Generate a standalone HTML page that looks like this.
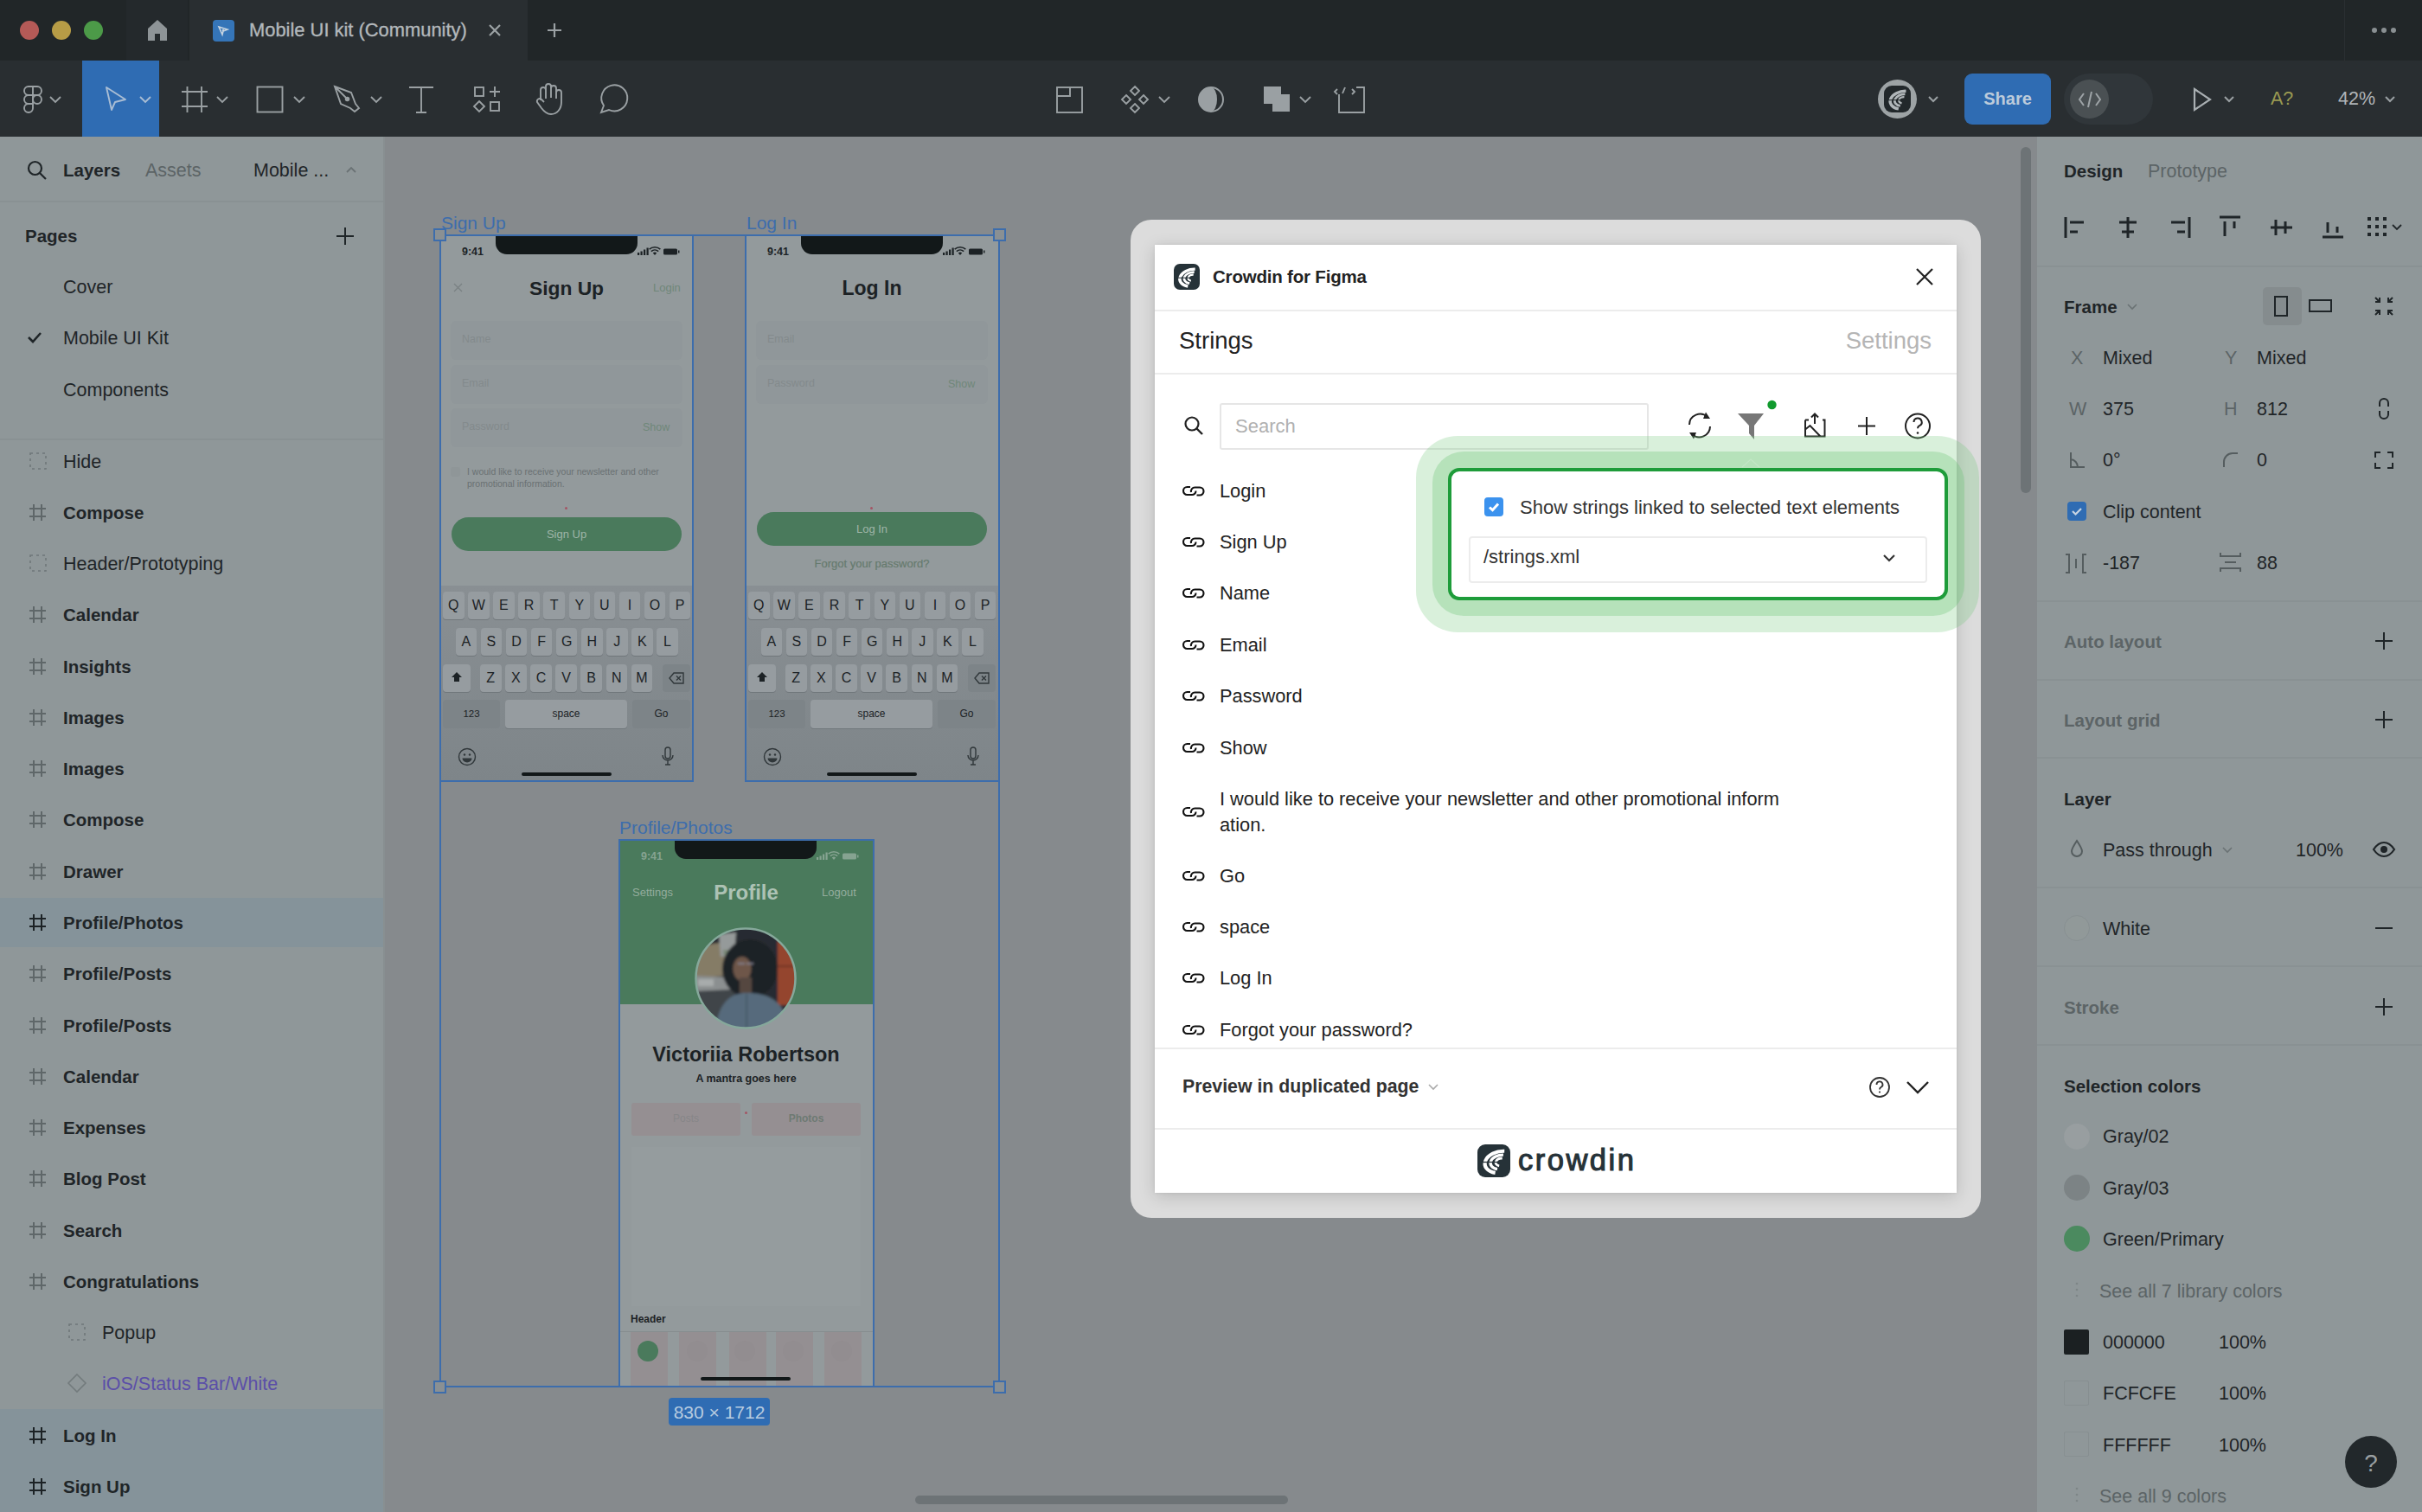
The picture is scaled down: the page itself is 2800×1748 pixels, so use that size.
<!DOCTYPE html>
<html><head><meta charset="utf-8">
<style>
*{margin:0;padding:0;box-sizing:border-box}
html,body{width:2800px;height:1748px;overflow:hidden;background:#868c8d;font-family:"Liberation Sans",sans-serif}
.a{position:absolute}
.t{position:absolute;white-space:nowrap;line-height:1}
#tabbar{left:0;top:0;width:2800px;height:70px;background:#212628}
#toolbar{left:0;top:70px;width:2800px;height:88px;background:#2a3033}
#left{left:0;top:158px;width:443px;height:1590px;background:#8f9697}
#right{left:2355px;top:158px;width:445px;height:1590px;background:#8f9697}
#canvas{left:443px;top:158px;width:1912px;height:1590px;background:#868c8d}
.ic{position:absolute;overflow:visible}
.lay{position:absolute;left:73px;font-size:22px;color:#1f2528;line-height:1}
.b{font-weight:bold}
</style></head><body>
<!-- TAB BAR -->
<div class="a" style="left:0;top:0;width:2800px;height:70px;background:#212628"></div>
<div class="a" style="left:146px;top:0;width:71px;height:70px;background:#24292c"></div>
<div class="a" style="left:219px;top:0;width:391px;height:70px;background:#292e31"></div>
<div class="a" style="left:2710px;top:0;width:1px;height:70px;background:#2a2f32"></div>
<div class="a" style="left:23px;top:24px;width:22px;height:22px;border-radius:50%;background:#b55a57"></div>
<div class="a" style="left:60px;top:24px;width:22px;height:22px;border-radius:50%;background:#b79c46"></div>
<div class="a" style="left:97px;top:24px;width:22px;height:22px;border-radius:50%;background:#4c9a48"></div>
<svg class="ic" style="left:170px;top:22px" width="24" height="26" viewBox="0 0 24 26"><path d="M12 1 L23 11 L23 25 L15 25 L15 17 L9 17 L9 25 L1 25 L1 11 Z" fill="#8e9497"/></svg>
<div class="a" style="left:246px;top:23px;width:25px;height:25px;border-radius:4px;background:#3575b8"></div>
<svg class="ic" style="left:249px;top:26px" width="19" height="19" viewBox="0 0 19 19"><path d="M4 5 L14 8 L9 10 L8 14 Z" fill="none" stroke="#c7d4e0" stroke-width="1.6"/><circle cx="9" cy="9" r="1.3" fill="#c7d4e0"/></svg>
<div class="t" style="left:288px;top:24px;font-size:21.9px;color:#b3b8bb;-webkit-text-stroke:0.35px #b3b8bb">Mobile UI kit (Community)</div>
<svg class="ic" style="left:564px;top:27px" width="16" height="16" viewBox="0 0 16 16"><path d="M2 2L14 14M14 2L2 14" stroke="#9ba1a4" stroke-width="2.2"/></svg>
<svg class="ic" style="left:632px;top:26px" width="18" height="18" viewBox="0 0 18 18"><path d="M9 1V17M1 9H17" stroke="#9ba1a4" stroke-width="2.2"/></svg>
<div class="a" style="left:2742px;top:32px;width:6px;height:6px;border-radius:50%;background:#8a9093"></div>
<div class="a" style="left:2753px;top:32px;width:6px;height:6px;border-radius:50%;background:#8a9093"></div>
<div class="a" style="left:2764px;top:32px;width:6px;height:6px;border-radius:50%;background:#8a9093"></div>

<!-- TOOLBAR -->
<div class="a" style="left:0;top:70px;width:2800px;height:88px;background:#292e31"></div>
<div class="a" style="left:95px;top:70px;width:89px;height:88px;background:#2f6cb3"></div>
<svg class="ic" style="left:0;top:70px" width="1600" height="88" viewBox="0 0 1600 88">
 <g fill="none" stroke="#9aa0a3" stroke-width="1.9">
  <path d="M38 30H33a5 5 0 0 0 0 10H38ZM38 30H43a5 5 0 0 1 0 10H38ZM38 40H33a5 5 0 0 0 0 10H38ZM38 50H33a5 5 0 1 0 5 5Z"/>
  <circle cx="43" cy="45" r="5"/>
  <path d="M58 42l6 6 6-6"/>
  <path d="M162 42l6 6 6-6" stroke="#a9bdd4"/>
  <path d="M123 31 L145 45 L133 48 L129 57 Z" stroke="#a9bdd4" stroke-linejoin="round"/>
  <path d="M216.5 30V60M233 30V60M210 36H240M210 53H240"/>
  <path d="M251 42l6 6 6-6"/>
  <rect x="297.5" y="30.5" width="29" height="29"/>
  <path d="M340 42l6 6 6-6"/>
  <path d="M387 30 L406 37 L411 50 L415 55 L410 59 L405 55 L394 50 Z M387 30 L401 44"/><circle cx="401.5" cy="44.5" r="1.8" fill="#9aa0a3"/>
  <path d="M429 42l6 6 6-6"/>
  <path d="M473 31H501M487 31V60M481 60H493"/>
  <rect x="549" y="31" width="10" height="10"/><path d="M572 30V42M566 36H578"/><path d="M554 47 L560 53 L554 59 L548 53 Z"/><rect x="567" y="48" width="10" height="10"/>
  <path d="M625 46V34a3 3 0 0 1 6 0v10M631 42V30a3 3 0 0 1 6 0v13M637 43V32a3 3 0 0 1 6 0v12M643 44V37a3 3 0 0 1 6 0v11c0 8-5 14-12 14-5 0-8-3-11-7l-5-7a3 3 0 0 1 5-3l3 3"/>
  <path d="M695 60 L698 52 a15 15 0 1 1 6 5 Z"/>
  <rect x="1222" y="31" width="29" height="29"/><path d="M1222 41H1237V31"/>
  <path d="M1312 30l5 5-5 5-5-5zM1302 40l5 5-5 5-5-5zM1322 40l5 5-5 5-5-5zM1312 50l5 5-5 5-5-5z"/>
  <path d="M1340 42l6 6 6-6"/>
  <path d="M1503 42l6 6 6-6"/>
  <path d="M1548 39V60H1577V31H1568M1546 33l-3 3 3 3M1552 38l3-7M1563 33l3 3-3 3"/>
 </g>
 <circle cx="1400" cy="45" r="14" fill="#9aa0a3"/><path d="M1400 31 a14 14 0 0 1 0 28 a7 14 0 0 0 0-28z" fill="#292e31"/><circle cx="1400" cy="45" r="14" fill="none" stroke="#9aa0a3" stroke-width="2"/>
 <path d="M1461 30h20v9h10v20h-20v-9h-10z" fill="#9aa0a3"/>
</svg>
<!-- right toolbar -->
<div class="a" style="left:2171px;top:92px;width:45px;height:45px;border-radius:50%;background:#9da3a5"></div>
<svg class="ic" style="left:2178px;top:99px" width="31" height="31" viewBox="0 0 31 31"><rect width="31" height="31" rx="9" fill="#22282b"/><g transform="rotate(-10 22.43 16.72)"><path d="M27.22 7.03A15.50 10.20 0 0 0 15.16 25.73" fill="none" stroke="#b0b6b9" stroke-width="3.43"/><path d="M25.59 10.36A10.20 6.69 0 0 0 17.65 22.63" fill="none" stroke="#b0b6b9" stroke-width="2.77"/><path d="M24.07 13.31A5.30 3.59 0 0 0 19.94 19.89" fill="none" stroke="#b0b6b9" stroke-width="2.28"/></g><path d="M3.3 16.7H19.2" stroke="#22282b" stroke-width="1.06"/></svg>
<svg class="ic" style="left:2228px;top:110px" width="14" height="10" viewBox="0 0 14 10"><path d="M2 2l5 5 5-5" fill="none" stroke="#9aa0a3" stroke-width="2"/></svg>
<div class="a" style="left:2271px;top:85px;width:100px;height:59px;border-radius:9px;background:#2f6cb3"></div>
<div class="t b" style="left:2271px;top:104px;width:100px;text-align:center;font-size:20px;color:#bccbdb">Share</div>
<div class="a" style="left:2386px;top:85px;width:103px;height:59px;border-radius:30px;background:#30363a"></div>
<div class="a" style="left:2393px;top:92px;width:45px;height:45px;border-radius:50%;background:#4a5053"></div>
<svg class="ic" style="left:2402px;top:104px" width="28" height="22" viewBox="0 0 28 22"><path d="M7 4L2 11l5 7M21 4l5 7-5 7M16 2l-4 18" fill="none" stroke="#9ea4a7" stroke-width="2"/></svg>
<svg class="ic" style="left:2535px;top:101px" width="22" height="28" viewBox="0 0 22 28"><path d="M2 2L20 14 2 26Z" fill="none" stroke="#a9afb2" stroke-width="2.2"/></svg>
<svg class="ic" style="left:2570px;top:110px" width="14" height="10" viewBox="0 0 14 10"><path d="M2 2l5 5 5-5" fill="none" stroke="#9aa0a3" stroke-width="2"/></svg>
<div class="t" style="left:2625px;top:104px;font-size:21.5px;color:#9a9a52">A?</div>
<div class="t" style="left:2703px;top:104px;font-size:21.5px;color:#b0b5b8">42%</div>
<svg class="ic" style="left:2756px;top:110px" width="14" height="10" viewBox="0 0 14 10"><path d="M2 2l5 5 5-5" fill="none" stroke="#9aa0a3" stroke-width="2"/></svg>
<div class="a" style="left:443px;top:158px;width:1912px;height:1590px;background:#868a8d"></div>
<!-- CANVAS -->
<div class="a" style="left:509px;top:272px;width:292px;height:631px;background:#939a9c"></div>
<div class="a" style="left:862px;top:272px;width:292px;height:631px;background:#939a9c"></div>
<div class="a" style="left:573px;top:272px;width:164px;height:22px;background:#121819;border-radius:0 0 13px 13px"></div>
<div class="t b" style="left:534px;top:285px;font-size:12.5px;color:#1c2225">9:41</div>
<svg class="ic" style="left:737px;top:285px" width="52" height="12" viewBox="0 0 52 12"><g fill="#1c2225"><rect x="0" y="7" width="2.2" height="3"/><rect x="3.5" y="5.5" width="2.2" height="4.5"/><rect x="7" y="3.5" width="2.2" height="6.5"/><rect x="10.5" y="1.5" width="2.2" height="8.5"/><path d="M20 10l-2.2-2.4a3.2 3.2 0 0 1 4.4 0z M16.4 6.2a5.4 5.4 0 0 1 7.2 0l1.1-1.2a7 7 0 0 0-9.4 0z M14.2 3.8a8.6 8.6 0 0 1 11.6 0l1.1-1.2a10.2 10.2 0 0 0-13.8 0z"/><rect x="30" y="2.5" width="16" height="7" rx="1.5"/><rect x="47" y="4.5" width="1.5" height="3"/></g></svg>
<svg class="ic" style="left:524px;top:327px" width="11" height="11" viewBox="0 0 11 11"><path d="M1 1l9 9M10 1l-9 9" stroke="#7a8183" stroke-width="1.3"/></svg>
<div class="t" style="left:509px;top:322px;width:292px;text-align:center;font-size:22.8px;font-weight:bold;color:#1c2225">Sign Up</div>
<div class="t" style="left:755px;top:326px;font-size:13px;color:#6f8779">Login</div>
<div class="a" style="left:521px;top:371.0px;width:268px;height:45px;border-radius:6px;background:#90979a"></div>
<div class="t" style="left:534px;top:386.0px;font-size:12.5px;color:#838a8c">Name</div>
<div class="a" style="left:521px;top:421.7px;width:268px;height:45px;border-radius:6px;background:#90979a"></div>
<div class="t" style="left:534px;top:436.7px;font-size:12.5px;color:#838a8c">Email</div>
<div class="a" style="left:521px;top:472.4px;width:268px;height:45px;border-radius:6px;background:#90979a"></div>
<div class="t" style="left:534px;top:487.4px;font-size:12.5px;color:#838a8c">Password</div>
<div class="t" style="left:743px;top:488.4px;font-size:12.5px;color:#6f8779">Show</div>
<div class="a" style="left:521px;top:540px;width:11px;height:11px;border-radius:3px;background:#8f9698"></div>
<div class="t" style="left:540px;top:539px;font-size:10.5px;line-height:13.5px;color:#6a7173;white-space:normal;width:260px">I would like to receive your newsletter and other promotional information.</div>
<div class="a" style="left:653px;top:586px;width:3px;height:3px;border-radius:50%;background:#a45565"></div>
<div class="a" style="left:522px;top:598px;width:266px;height:39px;border-radius:20px;background:#4a7a5c"></div>
<div class="t" style="left:522px;top:611px;width:266px;text-align:center;font-size:13px;color:#9fb5a8">Sign Up</div>
<div class="a" style="left:509px;top:677px;width:292px;height:226px;background:linear-gradient(#898f93,#7e8589)"></div>
<div class="a" style="left:512.0px;top:684px;width:24.5px;height:31.5px;border-radius:4px;background:#969ca0;box-shadow:0 1px 0 #70777b"></div>
<div class="t" style="left:512.0px;top:692px;width:24.5px;text-align:center;font-size:16px;color:#1c2225">Q</div>
<div class="a" style="left:541.1px;top:684px;width:24.5px;height:31.5px;border-radius:4px;background:#969ca0;box-shadow:0 1px 0 #70777b"></div>
<div class="t" style="left:541.1px;top:692px;width:24.5px;text-align:center;font-size:16px;color:#1c2225">W</div>
<div class="a" style="left:570.2px;top:684px;width:24.5px;height:31.5px;border-radius:4px;background:#969ca0;box-shadow:0 1px 0 #70777b"></div>
<div class="t" style="left:570.2px;top:692px;width:24.5px;text-align:center;font-size:16px;color:#1c2225">E</div>
<div class="a" style="left:599.3px;top:684px;width:24.5px;height:31.5px;border-radius:4px;background:#969ca0;box-shadow:0 1px 0 #70777b"></div>
<div class="t" style="left:599.3px;top:692px;width:24.5px;text-align:center;font-size:16px;color:#1c2225">R</div>
<div class="a" style="left:628.4px;top:684px;width:24.5px;height:31.5px;border-radius:4px;background:#969ca0;box-shadow:0 1px 0 #70777b"></div>
<div class="t" style="left:628.4px;top:692px;width:24.5px;text-align:center;font-size:16px;color:#1c2225">T</div>
<div class="a" style="left:657.5px;top:684px;width:24.5px;height:31.5px;border-radius:4px;background:#969ca0;box-shadow:0 1px 0 #70777b"></div>
<div class="t" style="left:657.5px;top:692px;width:24.5px;text-align:center;font-size:16px;color:#1c2225">Y</div>
<div class="a" style="left:686.6px;top:684px;width:24.5px;height:31.5px;border-radius:4px;background:#969ca0;box-shadow:0 1px 0 #70777b"></div>
<div class="t" style="left:686.6px;top:692px;width:24.5px;text-align:center;font-size:16px;color:#1c2225">U</div>
<div class="a" style="left:715.7px;top:684px;width:24.5px;height:31.5px;border-radius:4px;background:#969ca0;box-shadow:0 1px 0 #70777b"></div>
<div class="t" style="left:715.7px;top:692px;width:24.5px;text-align:center;font-size:16px;color:#1c2225">I</div>
<div class="a" style="left:744.8px;top:684px;width:24.5px;height:31.5px;border-radius:4px;background:#969ca0;box-shadow:0 1px 0 #70777b"></div>
<div class="t" style="left:744.8px;top:692px;width:24.5px;text-align:center;font-size:16px;color:#1c2225">O</div>
<div class="a" style="left:773.9px;top:684px;width:24.5px;height:31.5px;border-radius:4px;background:#969ca0;box-shadow:0 1px 0 #70777b"></div>
<div class="t" style="left:773.9px;top:692px;width:24.5px;text-align:center;font-size:16px;color:#1c2225">P</div>
<div class="a" style="left:526.5px;top:726px;width:24.5px;height:31.5px;border-radius:4px;background:#969ca0;box-shadow:0 1px 0 #70777b"></div>
<div class="t" style="left:526.5px;top:734px;width:24.5px;text-align:center;font-size:16px;color:#1c2225">A</div>
<div class="a" style="left:555.6px;top:726px;width:24.5px;height:31.5px;border-radius:4px;background:#969ca0;box-shadow:0 1px 0 #70777b"></div>
<div class="t" style="left:555.6px;top:734px;width:24.5px;text-align:center;font-size:16px;color:#1c2225">S</div>
<div class="a" style="left:584.7px;top:726px;width:24.5px;height:31.5px;border-radius:4px;background:#969ca0;box-shadow:0 1px 0 #70777b"></div>
<div class="t" style="left:584.7px;top:734px;width:24.5px;text-align:center;font-size:16px;color:#1c2225">D</div>
<div class="a" style="left:613.8px;top:726px;width:24.5px;height:31.5px;border-radius:4px;background:#969ca0;box-shadow:0 1px 0 #70777b"></div>
<div class="t" style="left:613.8px;top:734px;width:24.5px;text-align:center;font-size:16px;color:#1c2225">F</div>
<div class="a" style="left:642.9px;top:726px;width:24.5px;height:31.5px;border-radius:4px;background:#969ca0;box-shadow:0 1px 0 #70777b"></div>
<div class="t" style="left:642.9px;top:734px;width:24.5px;text-align:center;font-size:16px;color:#1c2225">G</div>
<div class="a" style="left:672.0px;top:726px;width:24.5px;height:31.5px;border-radius:4px;background:#969ca0;box-shadow:0 1px 0 #70777b"></div>
<div class="t" style="left:672.0px;top:734px;width:24.5px;text-align:center;font-size:16px;color:#1c2225">H</div>
<div class="a" style="left:701.1px;top:726px;width:24.5px;height:31.5px;border-radius:4px;background:#969ca0;box-shadow:0 1px 0 #70777b"></div>
<div class="t" style="left:701.1px;top:734px;width:24.5px;text-align:center;font-size:16px;color:#1c2225">J</div>
<div class="a" style="left:730.2px;top:726px;width:24.5px;height:31.5px;border-radius:4px;background:#969ca0;box-shadow:0 1px 0 #70777b"></div>
<div class="t" style="left:730.2px;top:734px;width:24.5px;text-align:center;font-size:16px;color:#1c2225">K</div>
<div class="a" style="left:759.3px;top:726px;width:24.5px;height:31.5px;border-radius:4px;background:#969ca0;box-shadow:0 1px 0 #70777b"></div>
<div class="t" style="left:759.3px;top:734px;width:24.5px;text-align:center;font-size:16px;color:#1c2225">L</div>
<div class="a" style="left:512px;top:768px;width:32px;height:31.5px;border-radius:4px;background:#969ca0;box-shadow:0 1px 0 #70777b"></div>
<svg class="ic" style="left:521px;top:776px" width="14" height="14" viewBox="0 0 14 14"><path d="M7 1L13 7H10V12H4V7H1Z" fill="#1c2225"/></svg>
<div class="a" style="left:555.0px;top:768px;width:24.5px;height:31.5px;border-radius:4px;background:#969ca0;box-shadow:0 1px 0 #70777b"></div>
<div class="t" style="left:555.0px;top:776px;width:24.5px;text-align:center;font-size:16px;color:#1c2225">Z</div>
<div class="a" style="left:584.1px;top:768px;width:24.5px;height:31.5px;border-radius:4px;background:#969ca0;box-shadow:0 1px 0 #70777b"></div>
<div class="t" style="left:584.1px;top:776px;width:24.5px;text-align:center;font-size:16px;color:#1c2225">X</div>
<div class="a" style="left:613.2px;top:768px;width:24.5px;height:31.5px;border-radius:4px;background:#969ca0;box-shadow:0 1px 0 #70777b"></div>
<div class="t" style="left:613.2px;top:776px;width:24.5px;text-align:center;font-size:16px;color:#1c2225">C</div>
<div class="a" style="left:642.3px;top:768px;width:24.5px;height:31.5px;border-radius:4px;background:#969ca0;box-shadow:0 1px 0 #70777b"></div>
<div class="t" style="left:642.3px;top:776px;width:24.5px;text-align:center;font-size:16px;color:#1c2225">V</div>
<div class="a" style="left:671.4px;top:768px;width:24.5px;height:31.5px;border-radius:4px;background:#969ca0;box-shadow:0 1px 0 #70777b"></div>
<div class="t" style="left:671.4px;top:776px;width:24.5px;text-align:center;font-size:16px;color:#1c2225">B</div>
<div class="a" style="left:700.5px;top:768px;width:24.5px;height:31.5px;border-radius:4px;background:#969ca0;box-shadow:0 1px 0 #70777b"></div>
<div class="t" style="left:700.5px;top:776px;width:24.5px;text-align:center;font-size:16px;color:#1c2225">N</div>
<div class="a" style="left:729.6px;top:768px;width:24.5px;height:31.5px;border-radius:4px;background:#969ca0;box-shadow:0 1px 0 #70777b"></div>
<div class="t" style="left:729.6px;top:776px;width:24.5px;text-align:center;font-size:16px;color:#1c2225">M</div>
<div class="a" style="left:766px;top:768px;width:32px;height:32px;border-radius:4px;background:#7d8488"></div>
<svg class="ic" style="left:773px;top:777px" width="19" height="14" viewBox="0 0 19 14"><path d="M6 1H17V13H6L1 7Z" fill="none" stroke="#30373a" stroke-width="1.4"/><path d="M9 4.5l5 5M14 4.5l-5 5" stroke="#30373a" stroke-width="1.4"/></svg>
<div class="a" style="left:512px;top:809px;width:66px;height:33px;border-radius:4px;background:#7d8488"></div>
<div class="t" style="left:512px;top:820px;width:66px;text-align:center;font-size:11.5px;color:#1c2225">123</div>
<div class="a" style="left:584px;top:809px;width:141px;height:33px;border-radius:4px;background:#969ca0;box-shadow:0 1px 0 #70777b"></div>
<div class="t" style="left:584px;top:819px;width:141px;text-align:center;font-size:12px;color:#1c2225">space</div>
<div class="a" style="left:731px;top:809px;width:67px;height:33px;border-radius:4px;background:#7d8488"></div>
<div class="t" style="left:731px;top:819px;width:67px;text-align:center;font-size:12px;color:#1c2225">Go</div>
<svg class="ic" style="left:529px;top:864px" width="22" height="22" viewBox="0 0 22 22"><circle cx="11" cy="11" r="9.5" fill="none" stroke="#30373a" stroke-width="1.4"/><circle cx="8" cy="8.5" r="1.2" fill="#30373a"/><circle cx="14" cy="8.5" r="1.2" fill="#30373a"/><path d="M5.5 12.5h11a5.5 5 0 0 1-11 0z" fill="#30373a"/></svg>
<svg class="ic" style="left:765px;top:863px" width="14" height="24" viewBox="0 0 14 24"><rect x="4" y="1" width="6" height="13" rx="3" fill="none" stroke="#30373a" stroke-width="1.4"/><path d="M1 10a6 6 0 0 0 12 0M7 16v5M4 21h6" fill="none" stroke="#30373a" stroke-width="1.4"/></svg>
<div class="a" style="left:603px;top:893px;width:104px;height:4px;border-radius:2px;background:#121819"></div>
<div class="a" style="left:926px;top:272px;width:164px;height:22px;background:#121819;border-radius:0 0 13px 13px"></div>
<div class="t b" style="left:887px;top:285px;font-size:12.5px;color:#1c2225">9:41</div>
<svg class="ic" style="left:1090px;top:285px" width="52" height="12" viewBox="0 0 52 12"><g fill="#1c2225"><rect x="0" y="7" width="2.2" height="3"/><rect x="3.5" y="5.5" width="2.2" height="4.5"/><rect x="7" y="3.5" width="2.2" height="6.5"/><rect x="10.5" y="1.5" width="2.2" height="8.5"/><path d="M20 10l-2.2-2.4a3.2 3.2 0 0 1 4.4 0z M16.4 6.2a5.4 5.4 0 0 1 7.2 0l1.1-1.2a7 7 0 0 0-9.4 0z M14.2 3.8a8.6 8.6 0 0 1 11.6 0l1.1-1.2a10.2 10.2 0 0 0-13.8 0z"/><rect x="30" y="2.5" width="16" height="7" rx="1.5"/><rect x="47" y="4.5" width="1.5" height="3"/></g></svg>
<div class="t" style="left:862px;top:322px;width:292px;text-align:center;font-size:23px;font-weight:bold;color:#1c2225">Log In</div>
<div class="a" style="left:874px;top:371.0px;width:268px;height:45px;border-radius:6px;background:#90979a"></div>
<div class="t" style="left:887px;top:386.0px;font-size:12.5px;color:#838a8c">Email</div>
<div class="a" style="left:874px;top:421.7px;width:268px;height:45px;border-radius:6px;background:#90979a"></div>
<div class="t" style="left:887px;top:436.7px;font-size:12.5px;color:#838a8c">Password</div>
<div class="t" style="left:1096px;top:437.7px;font-size:12.5px;color:#6f8779">Show</div>
<div class="a" style="left:1006px;top:586px;width:3px;height:3px;border-radius:50%;background:#a45565"></div>
<div class="a" style="left:875px;top:592px;width:266px;height:39px;border-radius:20px;background:#4a7a5c"></div>
<div class="t" style="left:875px;top:605px;width:266px;text-align:center;font-size:13px;color:#9fb5a8">Log In</div>
<div class="t" style="left:862px;top:645px;width:292px;text-align:center;font-size:13px;color:#667a6e;-webkit-text-stroke:0.2px #667a6e">Forgot your password?</div>
<div class="a" style="left:862px;top:677px;width:292px;height:226px;background:linear-gradient(#898f93,#7e8589)"></div>
<div class="a" style="left:865.0px;top:684px;width:24.5px;height:31.5px;border-radius:4px;background:#969ca0;box-shadow:0 1px 0 #70777b"></div>
<div class="t" style="left:865.0px;top:692px;width:24.5px;text-align:center;font-size:16px;color:#1c2225">Q</div>
<div class="a" style="left:894.1px;top:684px;width:24.5px;height:31.5px;border-radius:4px;background:#969ca0;box-shadow:0 1px 0 #70777b"></div>
<div class="t" style="left:894.1px;top:692px;width:24.5px;text-align:center;font-size:16px;color:#1c2225">W</div>
<div class="a" style="left:923.2px;top:684px;width:24.5px;height:31.5px;border-radius:4px;background:#969ca0;box-shadow:0 1px 0 #70777b"></div>
<div class="t" style="left:923.2px;top:692px;width:24.5px;text-align:center;font-size:16px;color:#1c2225">E</div>
<div class="a" style="left:952.3px;top:684px;width:24.5px;height:31.5px;border-radius:4px;background:#969ca0;box-shadow:0 1px 0 #70777b"></div>
<div class="t" style="left:952.3px;top:692px;width:24.5px;text-align:center;font-size:16px;color:#1c2225">R</div>
<div class="a" style="left:981.4px;top:684px;width:24.5px;height:31.5px;border-radius:4px;background:#969ca0;box-shadow:0 1px 0 #70777b"></div>
<div class="t" style="left:981.4px;top:692px;width:24.5px;text-align:center;font-size:16px;color:#1c2225">T</div>
<div class="a" style="left:1010.5px;top:684px;width:24.5px;height:31.5px;border-radius:4px;background:#969ca0;box-shadow:0 1px 0 #70777b"></div>
<div class="t" style="left:1010.5px;top:692px;width:24.5px;text-align:center;font-size:16px;color:#1c2225">Y</div>
<div class="a" style="left:1039.6px;top:684px;width:24.5px;height:31.5px;border-radius:4px;background:#969ca0;box-shadow:0 1px 0 #70777b"></div>
<div class="t" style="left:1039.6px;top:692px;width:24.5px;text-align:center;font-size:16px;color:#1c2225">U</div>
<div class="a" style="left:1068.7px;top:684px;width:24.5px;height:31.5px;border-radius:4px;background:#969ca0;box-shadow:0 1px 0 #70777b"></div>
<div class="t" style="left:1068.7px;top:692px;width:24.5px;text-align:center;font-size:16px;color:#1c2225">I</div>
<div class="a" style="left:1097.8px;top:684px;width:24.5px;height:31.5px;border-radius:4px;background:#969ca0;box-shadow:0 1px 0 #70777b"></div>
<div class="t" style="left:1097.8px;top:692px;width:24.5px;text-align:center;font-size:16px;color:#1c2225">O</div>
<div class="a" style="left:1126.9px;top:684px;width:24.5px;height:31.5px;border-radius:4px;background:#969ca0;box-shadow:0 1px 0 #70777b"></div>
<div class="t" style="left:1126.9px;top:692px;width:24.5px;text-align:center;font-size:16px;color:#1c2225">P</div>
<div class="a" style="left:879.5px;top:726px;width:24.5px;height:31.5px;border-radius:4px;background:#969ca0;box-shadow:0 1px 0 #70777b"></div>
<div class="t" style="left:879.5px;top:734px;width:24.5px;text-align:center;font-size:16px;color:#1c2225">A</div>
<div class="a" style="left:908.6px;top:726px;width:24.5px;height:31.5px;border-radius:4px;background:#969ca0;box-shadow:0 1px 0 #70777b"></div>
<div class="t" style="left:908.6px;top:734px;width:24.5px;text-align:center;font-size:16px;color:#1c2225">S</div>
<div class="a" style="left:937.7px;top:726px;width:24.5px;height:31.5px;border-radius:4px;background:#969ca0;box-shadow:0 1px 0 #70777b"></div>
<div class="t" style="left:937.7px;top:734px;width:24.5px;text-align:center;font-size:16px;color:#1c2225">D</div>
<div class="a" style="left:966.8px;top:726px;width:24.5px;height:31.5px;border-radius:4px;background:#969ca0;box-shadow:0 1px 0 #70777b"></div>
<div class="t" style="left:966.8px;top:734px;width:24.5px;text-align:center;font-size:16px;color:#1c2225">F</div>
<div class="a" style="left:995.9px;top:726px;width:24.5px;height:31.5px;border-radius:4px;background:#969ca0;box-shadow:0 1px 0 #70777b"></div>
<div class="t" style="left:995.9px;top:734px;width:24.5px;text-align:center;font-size:16px;color:#1c2225">G</div>
<div class="a" style="left:1025.0px;top:726px;width:24.5px;height:31.5px;border-radius:4px;background:#969ca0;box-shadow:0 1px 0 #70777b"></div>
<div class="t" style="left:1025.0px;top:734px;width:24.5px;text-align:center;font-size:16px;color:#1c2225">H</div>
<div class="a" style="left:1054.1px;top:726px;width:24.5px;height:31.5px;border-radius:4px;background:#969ca0;box-shadow:0 1px 0 #70777b"></div>
<div class="t" style="left:1054.1px;top:734px;width:24.5px;text-align:center;font-size:16px;color:#1c2225">J</div>
<div class="a" style="left:1083.2px;top:726px;width:24.5px;height:31.5px;border-radius:4px;background:#969ca0;box-shadow:0 1px 0 #70777b"></div>
<div class="t" style="left:1083.2px;top:734px;width:24.5px;text-align:center;font-size:16px;color:#1c2225">K</div>
<div class="a" style="left:1112.3px;top:726px;width:24.5px;height:31.5px;border-radius:4px;background:#969ca0;box-shadow:0 1px 0 #70777b"></div>
<div class="t" style="left:1112.3px;top:734px;width:24.5px;text-align:center;font-size:16px;color:#1c2225">L</div>
<div class="a" style="left:865px;top:768px;width:32px;height:31.5px;border-radius:4px;background:#969ca0;box-shadow:0 1px 0 #70777b"></div>
<svg class="ic" style="left:874px;top:776px" width="14" height="14" viewBox="0 0 14 14"><path d="M7 1L13 7H10V12H4V7H1Z" fill="#1c2225"/></svg>
<div class="a" style="left:908.0px;top:768px;width:24.5px;height:31.5px;border-radius:4px;background:#969ca0;box-shadow:0 1px 0 #70777b"></div>
<div class="t" style="left:908.0px;top:776px;width:24.5px;text-align:center;font-size:16px;color:#1c2225">Z</div>
<div class="a" style="left:937.1px;top:768px;width:24.5px;height:31.5px;border-radius:4px;background:#969ca0;box-shadow:0 1px 0 #70777b"></div>
<div class="t" style="left:937.1px;top:776px;width:24.5px;text-align:center;font-size:16px;color:#1c2225">X</div>
<div class="a" style="left:966.2px;top:768px;width:24.5px;height:31.5px;border-radius:4px;background:#969ca0;box-shadow:0 1px 0 #70777b"></div>
<div class="t" style="left:966.2px;top:776px;width:24.5px;text-align:center;font-size:16px;color:#1c2225">C</div>
<div class="a" style="left:995.3px;top:768px;width:24.5px;height:31.5px;border-radius:4px;background:#969ca0;box-shadow:0 1px 0 #70777b"></div>
<div class="t" style="left:995.3px;top:776px;width:24.5px;text-align:center;font-size:16px;color:#1c2225">V</div>
<div class="a" style="left:1024.4px;top:768px;width:24.5px;height:31.5px;border-radius:4px;background:#969ca0;box-shadow:0 1px 0 #70777b"></div>
<div class="t" style="left:1024.4px;top:776px;width:24.5px;text-align:center;font-size:16px;color:#1c2225">B</div>
<div class="a" style="left:1053.5px;top:768px;width:24.5px;height:31.5px;border-radius:4px;background:#969ca0;box-shadow:0 1px 0 #70777b"></div>
<div class="t" style="left:1053.5px;top:776px;width:24.5px;text-align:center;font-size:16px;color:#1c2225">N</div>
<div class="a" style="left:1082.6px;top:768px;width:24.5px;height:31.5px;border-radius:4px;background:#969ca0;box-shadow:0 1px 0 #70777b"></div>
<div class="t" style="left:1082.6px;top:776px;width:24.5px;text-align:center;font-size:16px;color:#1c2225">M</div>
<div class="a" style="left:1119px;top:768px;width:32px;height:32px;border-radius:4px;background:#7d8488"></div>
<svg class="ic" style="left:1126px;top:777px" width="19" height="14" viewBox="0 0 19 14"><path d="M6 1H17V13H6L1 7Z" fill="none" stroke="#30373a" stroke-width="1.4"/><path d="M9 4.5l5 5M14 4.5l-5 5" stroke="#30373a" stroke-width="1.4"/></svg>
<div class="a" style="left:865px;top:809px;width:66px;height:33px;border-radius:4px;background:#7d8488"></div>
<div class="t" style="left:865px;top:820px;width:66px;text-align:center;font-size:11.5px;color:#1c2225">123</div>
<div class="a" style="left:937px;top:809px;width:141px;height:33px;border-radius:4px;background:#969ca0;box-shadow:0 1px 0 #70777b"></div>
<div class="t" style="left:937px;top:819px;width:141px;text-align:center;font-size:12px;color:#1c2225">space</div>
<div class="a" style="left:1084px;top:809px;width:67px;height:33px;border-radius:4px;background:#7d8488"></div>
<div class="t" style="left:1084px;top:819px;width:67px;text-align:center;font-size:12px;color:#1c2225">Go</div>
<svg class="ic" style="left:882px;top:864px" width="22" height="22" viewBox="0 0 22 22"><circle cx="11" cy="11" r="9.5" fill="none" stroke="#30373a" stroke-width="1.4"/><circle cx="8" cy="8.5" r="1.2" fill="#30373a"/><circle cx="14" cy="8.5" r="1.2" fill="#30373a"/><path d="M5.5 12.5h11a5.5 5 0 0 1-11 0z" fill="#30373a"/></svg>
<svg class="ic" style="left:1118px;top:863px" width="14" height="24" viewBox="0 0 14 24"><rect x="4" y="1" width="6" height="13" rx="3" fill="none" stroke="#30373a" stroke-width="1.4"/><path d="M1 10a6 6 0 0 0 12 0M7 16v5M4 21h6" fill="none" stroke="#30373a" stroke-width="1.4"/></svg>
<div class="a" style="left:956px;top:893px;width:104px;height:4px;border-radius:2px;background:#121819"></div>
<div class="a" style="left:716px;top:971px;width:293px;height:632px;background:#939a9c"></div>
<div class="a" style="left:716px;top:971px;width:293px;height:190px;background:#4a7a5c"></div>
<div class="a" style="left:780px;top:971px;width:164px;height:22px;background:#121819;border-radius:0 0 13px 13px"></div>
<div class="t b" style="left:741px;top:984px;font-size:12.5px;color:#86a391">9:41</div>
<svg class="ic" style="left:944px;top:984px" width="52" height="12" viewBox="0 0 52 12"><g fill="#86a391"><rect x="0" y="7" width="2.2" height="3"/><rect x="3.5" y="5.5" width="2.2" height="4.5"/><rect x="7" y="3.5" width="2.2" height="6.5"/><rect x="10.5" y="1.5" width="2.2" height="8.5"/><path d="M20 10l-2.2-2.4a3.2 3.2 0 0 1 4.4 0z M16.4 6.2a5.4 5.4 0 0 1 7.2 0l1.1-1.2a7 7 0 0 0-9.4 0z M14.2 3.8a8.6 8.6 0 0 1 11.6 0l1.1-1.2a10.2 10.2 0 0 0-13.8 0z"/><rect x="30" y="2.5" width="16" height="7" rx="1.5"/><rect x="47" y="4.5" width="1.5" height="3"/></g></svg>
<div class="t" style="left:731px;top:1025px;font-size:13px;color:#93ac9c">Settings</div>
<div class="t b" style="left:716px;top:1020px;width:293px;text-align:center;font-size:24px;color:#adc2b4">Profile</div>
<div class="t" style="left:950px;top:1025px;font-size:13px;color:#93ac9c">Logout</div>
<svg class="ic" style="left:803px;top:1072px" width="118" height="118" viewBox="0 0 118 118"><defs><clipPath id="av"><circle cx="59" cy="59" r="57.5"/></clipPath><filter id="bl" x="-10%" y="-10%" width="120%" height="120%"><feGaussianBlur stdDeviation="1.6"/></filter></defs>
<g clip-path="url(#av)"><g filter="url(#bl)">
<rect width="118" height="118" fill="#262c30"/>
<rect x="0" y="60" width="50" height="58" fill="#3f4548"/>
<path d="M0 22 L44 16 L44 56 L0 58Z" fill="#857b66"/>
<path d="M28 8 L48 6 L46 32 L30 34Z" fill="#959a9a"/>
<rect x="33" y="26" width="8" height="6" fill="#7c8a78"/>
<path d="M0 56 L44 58 L42 72 L0 74Z" fill="#8b8f90"/>
<rect x="4" y="60" width="18" height="8" fill="#a8acac"/>
<rect x="96" y="16" width="22" height="74" fill="#94452f"/>
<rect x="96" y="44" width="22" height="2" fill="#6e3222"/>
<ellipse cx="64" cy="48" rx="32" ry="34" fill="#1e2226"/>
<ellipse cx="55" cy="48" rx="10.5" ry="14" fill="#6e5649"/>
<rect x="52" y="58" width="14" height="18" fill="#55463f"/>
<path d="M24 118 C28 86 42 76 60 76 C82 76 104 82 110 118Z" fill="#566b7c"/>
<path d="M60 77 L60 118" stroke="#3d5060" stroke-width="1.2"/>
<path d="M50 42 h8 M60 42 h8" stroke="#8a8a9a" stroke-width="1.4"/>
</g></g>
<circle cx="59" cy="59" r="57.5" fill="none" stroke="#86a89b" stroke-width="2.5"/>
</svg>
<div class="t b" style="left:716px;top:1208px;width:293px;text-align:center;font-size:23.5px;color:#1c2225">Victoriia Robertson</div>
<div class="t b" style="left:716px;top:1241px;width:293px;text-align:center;font-size:12.5px;color:#1c2225">A mantra goes here</div>
<div class="a" style="left:730px;top:1275px;width:126px;height:38px;border-radius:3px;background:#958f92"></div>
<div class="a" style="left:869px;top:1275px;width:126px;height:38px;border-radius:3px;background:#958f92"></div>
<div class="t" style="left:730px;top:1287px;width:126px;text-align:center;font-size:12px;color:#868688">Posts</div>
<div class="t" style="left:869px;top:1287px;width:126px;text-align:center;font-size:12px;font-weight:bold;color:#6e7a73">Photos</div>
<div class="a" style="left:861px;top:1285px;width:3px;height:3px;border-radius:50%;background:#a45565"></div>
<div class="a" style="left:730px;top:1326px;width:265px;height:184px;background:#959c9e"></div>
<div class="t b" style="left:729px;top:1519px;font-size:12px;color:#1c2225">Header</div>
<div class="a" style="left:716px;top:1539px;width:293px;height:1px;background:#868d8f"></div>
<div class="a" style="left:729px;top:1540px;width:43px;height:63px;background:#948f92"></div>
<div class="a" style="left:737.0px;top:1550px;width:24px;height:24px;border-radius:50%;background:#4a7a5c"></div>
<div class="a" style="left:785px;top:1540px;width:43px;height:63px;background:#948f92"></div>
<div class="a" style="left:793.5px;top:1550px;width:24px;height:24px;border-radius:50%;background:#928d90"></div>
<div class="a" style="left:843px;top:1540px;width:43px;height:63px;background:#948f92"></div>
<div class="a" style="left:849.0px;top:1550px;width:24px;height:24px;border-radius:50%;background:#928d90"></div>
<div class="a" style="left:897px;top:1540px;width:43px;height:63px;background:#948f92"></div>
<div class="a" style="left:904.6px;top:1550px;width:24px;height:24px;border-radius:50%;background:#928d90"></div>
<div class="a" style="left:953px;top:1540px;width:43px;height:63px;background:#948f92"></div>
<div class="a" style="left:960.6px;top:1550px;width:24px;height:24px;border-radius:50%;background:#928d90"></div>
<div class="a" style="left:810px;top:1592px;width:104px;height:4px;border-radius:2px;background:#121819"></div>
<div class="a" style="left:508px;top:271px;width:294px;height:633px;border:2px solid #3d6dac"></div>
<div class="a" style="left:861px;top:271px;width:295px;height:633px;border:2px solid #3d6dac"></div>
<div class="a" style="left:715px;top:970px;width:296px;height:634px;border:2px solid #3d6dac"></div>
<div class="a" style="left:508px;top:271px;width:648px;height:1333px;border:2px solid #3d6dac"></div>
<div class="a" style="left:501px;top:264px;width:15px;height:15px;background:#8a9093;border:2px solid #3d6dac"></div>
<div class="a" style="left:1148px;top:264px;width:15px;height:15px;background:#8a9093;border:2px solid #3d6dac"></div>
<div class="a" style="left:501px;top:1596px;width:15px;height:15px;background:#8a9093;border:2px solid #3d6dac"></div>
<div class="a" style="left:1148px;top:1596px;width:15px;height:15px;background:#8a9093;border:2px solid #3d6dac"></div>
<div class="t" style="left:510px;top:247px;font-size:21px;color:#3d6dac">Sign Up</div>
<div class="t" style="left:863px;top:247px;font-size:21px;color:#3d6dac">Log In</div>
<div class="t" style="left:716px;top:946px;font-size:21px;color:#3d6dac">Profile/Photos</div>
<div class="a" style="left:773px;top:1616px;width:117px;height:32px;border-radius:4px;background:#2f6cb3"></div>
<div class="t" style="left:773px;top:1622px;width:117px;text-align:center;font-size:21px;color:#b7cbe0">830 × 1712</div>
<div class="a" style="left:1058px;top:1729px;width:431px;height:10px;border-radius:5px;background:#6d7376"></div>
<!-- /CANVAS -->
<!-- DIALOG -->
<div class="a" style="left:1307px;top:254px;width:983px;height:1154px;border-radius:24px;background:#dcdcdc"></div>
<div class="a" style="left:1335px;top:283px;width:927px;height:1096px;background:#fff;box-shadow:0 4px 18px rgba(0,0,0,0.16),0 0 3px rgba(0,0,0,0.08)"></div>
<svg class="ic" style="left:1357px;top:305px" width="30" height="30" viewBox="0 0 30 30"><rect width="30" height="30" rx="7" fill="#263238"/><g transform="rotate(-10 21.71 16.18)"><path d="M26.35 6.80A15.00 9.87 0 0 0 14.67 24.90" fill="none" stroke="#fff" stroke-width="3.32"/><path d="M24.76 10.03A9.87 6.47 0 0 0 17.08 21.90" fill="none" stroke="#fff" stroke-width="2.68"/><path d="M23.30 12.88A5.13 3.47 0 0 0 19.30 19.25" fill="none" stroke="#fff" stroke-width="2.21"/></g><path d="M3.2 16.2H18.6" stroke="#263238" stroke-width="1.03"/></svg>
<div class="t b" style="left:1402px;top:310px;font-size:20.5px;color:#222;letter-spacing:-0.2px">Crowdin for Figma</div>
<svg class="ic" style="left:2213px;top:308px" width="24" height="24" viewBox="0 0 24 24"><path d="M3 3L21 21M21 3L3 21" stroke="#222" stroke-width="2.2"/></svg>
<div class="a" style="left:1335px;top:358px;width:927px;height:2px;background:#ececec"></div>
<div class="t" style="left:1363px;top:380px;font-size:27.5px;color:#222">Strings</div>
<div class="t" style="left:1800px;top:380px;width:433px;text-align:right;font-size:27.5px;color:#b5b5b5">Settings</div>
<div class="a" style="left:1335px;top:431px;width:927px;height:2px;background:#ececec"></div>
<svg class="ic" style="left:1368px;top:480px" width="24" height="24" viewBox="0 0 24 24"><circle cx="10" cy="10" r="7.5" fill="none" stroke="#222" stroke-width="2.2"/><path d="M15.5 15.5L22 22" stroke="#222" stroke-width="2.4"/></svg>
<div class="a" style="left:1410px;top:466px;width:496px;height:54px;border:2px solid #e6e6e6;border-radius:3px;background:#fff"></div>
<div class="t" style="left:1428px;top:482px;font-size:22px;color:#b0b0b0">Search</div>
<svg class="ic" style="left:1940px;top:460px" width="300" height="64" viewBox="1940 460 300 64">
 <g fill="none" stroke="#222" stroke-width="2">
  <path d="M1953 491a12.5 12.5 0 0 1 21-9"/>
  <path d="M1977 493a12.5 12.5 0 0 1-21 9"/>
  <path d="M2087 485.5v19h22.5v-19h-2.5M2091 485.5h-4M2087 496.5l5.5-4.5 12 12.5M2098 490V479M2094 482.5l4-4 4 4"/>
  <path d="M2158 482V503M2148 492.5H2168"/>
  <circle cx="2217" cy="492.5" r="14"/>
  <path d="M2212.5 488a4.6 4.6 0 1 1 6.5 4.2c-1.4 .7-2 1.5-2 3"/>
 </g>
 <path d="M1972 476.5l5 7.5-8 0z M1958 507.5l-5-7.5 8 0z" fill="#222"/>
 <path d="M2009 478H2039L2028 492V508L2022 501V492Z" fill="#777"/>
 <circle cx="2048.5" cy="468" r="5.2" fill="#119a2e"/>
 <circle cx="2217" cy="500.5" r="1.3" fill="#222"/>
</svg>
<svg class="ic" style="left:1365px;top:560px" width="30" height="16" viewBox="0 0 30 16"><g fill="none" stroke="#111" stroke-width="2.1" stroke-linecap="butt"><path d="M11 3H7.5a4.5 4.5 0 0 0 0 9H13a4.5 4.5 0 0 0 4.5-4.5"/><path d="M12 9a4.5 4.5 0 0 1 4.5-5.5H22a4.5 4.5 0 0 1 0 9h-3.5"/></g></svg>
<div class="t" style="left:1410px;top:556.5px;font-size:21.8px;color:#222">Login</div>
<svg class="ic" style="left:1365px;top:619px" width="30" height="16" viewBox="0 0 30 16"><g fill="none" stroke="#111" stroke-width="2.1" stroke-linecap="butt"><path d="M11 3H7.5a4.5 4.5 0 0 0 0 9H13a4.5 4.5 0 0 0 4.5-4.5"/><path d="M12 9a4.5 4.5 0 0 1 4.5-5.5H22a4.5 4.5 0 0 1 0 9h-3.5"/></g></svg>
<div class="t" style="left:1410px;top:615.5px;font-size:21.8px;color:#222">Sign Up</div>
<svg class="ic" style="left:1365px;top:678px" width="30" height="16" viewBox="0 0 30 16"><g fill="none" stroke="#111" stroke-width="2.1" stroke-linecap="butt"><path d="M11 3H7.5a4.5 4.5 0 0 0 0 9H13a4.5 4.5 0 0 0 4.5-4.5"/><path d="M12 9a4.5 4.5 0 0 1 4.5-5.5H22a4.5 4.5 0 0 1 0 9h-3.5"/></g></svg>
<div class="t" style="left:1410px;top:674.5px;font-size:21.8px;color:#222">Name</div>
<svg class="ic" style="left:1365px;top:738px" width="30" height="16" viewBox="0 0 30 16"><g fill="none" stroke="#111" stroke-width="2.1" stroke-linecap="butt"><path d="M11 3H7.5a4.5 4.5 0 0 0 0 9H13a4.5 4.5 0 0 0 4.5-4.5"/><path d="M12 9a4.5 4.5 0 0 1 4.5-5.5H22a4.5 4.5 0 0 1 0 9h-3.5"/></g></svg>
<div class="t" style="left:1410px;top:734.5px;font-size:21.8px;color:#222">Email</div>
<svg class="ic" style="left:1365px;top:797px" width="30" height="16" viewBox="0 0 30 16"><g fill="none" stroke="#111" stroke-width="2.1" stroke-linecap="butt"><path d="M11 3H7.5a4.5 4.5 0 0 0 0 9H13a4.5 4.5 0 0 0 4.5-4.5"/><path d="M12 9a4.5 4.5 0 0 1 4.5-5.5H22a4.5 4.5 0 0 1 0 9h-3.5"/></g></svg>
<div class="t" style="left:1410px;top:793.5px;font-size:21.8px;color:#222">Password</div>
<svg class="ic" style="left:1365px;top:857px" width="30" height="16" viewBox="0 0 30 16"><g fill="none" stroke="#111" stroke-width="2.1" stroke-linecap="butt"><path d="M11 3H7.5a4.5 4.5 0 0 0 0 9H13a4.5 4.5 0 0 0 4.5-4.5"/><path d="M12 9a4.5 4.5 0 0 1 4.5-5.5H22a4.5 4.5 0 0 1 0 9h-3.5"/></g></svg>
<div class="t" style="left:1410px;top:853.5px;font-size:21.8px;color:#222">Show</div>
<svg class="ic" style="left:1365px;top:931px" width="30" height="16" viewBox="0 0 30 16"><g fill="none" stroke="#111" stroke-width="2.1" stroke-linecap="butt"><path d="M11 3H7.5a4.5 4.5 0 0 0 0 9H13a4.5 4.5 0 0 0 4.5-4.5"/><path d="M12 9a4.5 4.5 0 0 1 4.5-5.5H22a4.5 4.5 0 0 1 0 9h-3.5"/></g></svg>
<div class="t" style="left:1410px;top:912.5px;font-size:21.8px;color:#222">I would like to receive your newsletter and other promotional inform</div>
<div class="t" style="left:1410px;top:942.5px;font-size:21.8px;color:#222">ation.</div>
<svg class="ic" style="left:1365px;top:1005px" width="30" height="16" viewBox="0 0 30 16"><g fill="none" stroke="#111" stroke-width="2.1" stroke-linecap="butt"><path d="M11 3H7.5a4.5 4.5 0 0 0 0 9H13a4.5 4.5 0 0 0 4.5-4.5"/><path d="M12 9a4.5 4.5 0 0 1 4.5-5.5H22a4.5 4.5 0 0 1 0 9h-3.5"/></g></svg>
<div class="t" style="left:1410px;top:1001.5px;font-size:21.8px;color:#222">Go</div>
<svg class="ic" style="left:1365px;top:1064px" width="30" height="16" viewBox="0 0 30 16"><g fill="none" stroke="#111" stroke-width="2.1" stroke-linecap="butt"><path d="M11 3H7.5a4.5 4.5 0 0 0 0 9H13a4.5 4.5 0 0 0 4.5-4.5"/><path d="M12 9a4.5 4.5 0 0 1 4.5-5.5H22a4.5 4.5 0 0 1 0 9h-3.5"/></g></svg>
<div class="t" style="left:1410px;top:1060.5px;font-size:21.8px;color:#222">space</div>
<svg class="ic" style="left:1365px;top:1123px" width="30" height="16" viewBox="0 0 30 16"><g fill="none" stroke="#111" stroke-width="2.1" stroke-linecap="butt"><path d="M11 3H7.5a4.5 4.5 0 0 0 0 9H13a4.5 4.5 0 0 0 4.5-4.5"/><path d="M12 9a4.5 4.5 0 0 1 4.5-5.5H22a4.5 4.5 0 0 1 0 9h-3.5"/></g></svg>
<div class="t" style="left:1410px;top:1119.5px;font-size:21.8px;color:#222">Log In</div>
<svg class="ic" style="left:1365px;top:1183px" width="30" height="16" viewBox="0 0 30 16"><g fill="none" stroke="#111" stroke-width="2.1" stroke-linecap="butt"><path d="M11 3H7.5a4.5 4.5 0 0 0 0 9H13a4.5 4.5 0 0 0 4.5-4.5"/><path d="M12 9a4.5 4.5 0 0 1 4.5-5.5H22a4.5 4.5 0 0 1 0 9h-3.5"/></g></svg>
<div class="t" style="left:1410px;top:1179.5px;font-size:21.8px;color:#222">Forgot your password?</div>
<div class="a" style="left:1335px;top:1211px;width:927px;height:2px;background:#ececec"></div>
<div class="t b" style="left:1367px;top:1246px;font-size:21.3px;color:#333">Preview in duplicated page</div>
<svg class="ic" style="left:1650px;top:1252px" width="14" height="10" viewBox="0 0 14 10"><path d="M2 2l5 5 5-5" fill="none" stroke="#aaa" stroke-width="1.6"/></svg>
<svg class="ic" style="left:2160px;top:1244px" width="26" height="26" viewBox="0 0 26 26"><circle cx="13" cy="13" r="11" fill="none" stroke="#333" stroke-width="1.8"/><path d="M9.5 10a3.5 3.5 0 1 1 5 3c-1 .6-1.5 1.2-1.5 2.4" fill="none" stroke="#333" stroke-width="1.8"/><circle cx="13" cy="18.5" r="1.1" fill="#333"/></svg>
<svg class="ic" style="left:2203px;top:1249px" width="28" height="16" viewBox="0 0 28 16"><path d="M2 2l12 12 12-12" fill="none" stroke="#222" stroke-width="2.4"/></svg>
<div class="a" style="left:1335px;top:1304px;width:927px;height:2px;background:#ececec"></div>
<svg class="ic" style="left:1708px;top:1323px" width="38" height="38" viewBox="0 0 38 38"><rect width="38" height="38" rx="9" fill="#263238"/><g transform="rotate(-10 27.50 20.50)"><path d="M33.37 8.61A19.00 12.50 0 0 0 18.58 31.54" fill="none" stroke="#fff" stroke-width="4.20"/><path d="M31.36 12.70A12.50 8.20 0 0 0 21.63 27.74" fill="none" stroke="#fff" stroke-width="3.40"/><path d="M29.51 16.32A6.50 4.40 0 0 0 24.45 24.38" fill="none" stroke="#fff" stroke-width="2.80"/></g><path d="M4.0 20.5H23.5" stroke="#263238" stroke-width="1.30"/></svg>
<div class="t" style="left:1755px;top:1324px;font-size:34.5px;letter-spacing:2.5px;color:#263238;-webkit-text-stroke:1.1px #263238">crowdin</div>
<!-- green highlight -->
<div class="a" style="left:1637px;top:504px;width:651px;height:227px;border-radius:48px;background:rgba(120,200,125,0.28)"></div>
<div class="a" style="left:1656px;top:522px;width:615px;height:190px;border-radius:36px;background:rgba(110,195,118,0.32)"></div>
<div class="a" style="left:1674px;top:541px;width:578px;height:153px;border-radius:13px;border:4.5px solid #1e9c3a;background:#fff"></div>
<div class="a" style="left:1716px;top:575px;width:22px;height:22px;border-radius:4px;background:#3b92ee"></div>
<svg class="ic" style="left:1719px;top:578px" width="16" height="16" viewBox="0 0 16 16"><path d="M3 8.5l3.5 3.2L13 4.5" fill="none" stroke="#fff" stroke-width="3"/></svg>
<div class="t" style="left:1757px;top:576px;font-size:22px;color:#333">Show strings linked to selected text elements</div>
<div class="a" style="left:1698px;top:620px;width:530px;height:54px;border:2px solid #ececec;border-radius:4px"></div>
<div class="t" style="left:1715px;top:633px;font-size:22px;color:#333">/strings.xml</div>
<svg class="ic" style="left:2176px;top:639px" width="16" height="12" viewBox="0 0 16 12"><path d="M2 3l6 6 6-6" fill="none" stroke="#333" stroke-width="2.2"/></svg>
<svg class="ic" style="left:2013px;top:529px" width="22" height="12" viewBox="0 0 22 12"><path d="M1 11L11 2 21 11" fill="none" stroke="rgba(255,255,255,0.18)" stroke-width="1.2"/></svg>
<!-- /DIALOG -->
<!-- LEFT PANEL -->
<div class="a" style="left:0;top:158px;width:443px;height:1590px;background:#8f9799"></div>
<div class="a" style="left:443px;top:158px;width:2px;height:1590px;background:#888f91"></div>
<div class="a" style="left:0;top:1038px;width:443px;height:57px;background:#85939a"></div>
<div class="a" style="left:0;top:1629px;width:443px;height:119px;background:#85939a"></div>
<svg class="ic" style="left:30px;top:184px" width="26" height="26" viewBox="0 0 26 26"><circle cx="10.5" cy="10.5" r="7.5" fill="none" stroke="#1f2528" stroke-width="2.2"/><path d="M16 16l7 7" stroke="#1f2528" stroke-width="2.2"/></svg>
<div class="t b" style="left:73px;top:187px;font-size:20.5px;color:#1f2528">Layers</div>
<div class="t" style="left:168px;top:187px;font-size:21.5px;color:#5c6466">Assets</div>
<div class="t" style="left:293px;top:187px;font-size:21.5px;color:#1f2528">Mobile ...</div>
<svg class="ic" style="left:399px;top:191px" width="14" height="10" viewBox="0 0 14 10"><path d="M2 8l5-5 5 5" fill="none" stroke="#6a7274" stroke-width="1.8"/></svg>
<div class="a" style="left:0;top:232px;width:443px;height:2px;background:#899193"></div>
<div class="t b" style="left:29px;top:263px;font-size:20.5px;color:#1f2528">Pages</div>
<svg class="ic" style="left:388px;top:262px" width="22" height="22" viewBox="0 0 22 22"><path d="M11 1V21M1 11H21" stroke="#1f2528" stroke-width="2"/></svg>
<div class="t" style="left:73px;top:322px;font-size:21.5px;color:#1f2528">Cover</div>
<svg class="ic" style="left:31px;top:382px" width="18" height="16" viewBox="0 0 18 16"><path d="M2 8l5 5 9-10" fill="none" stroke="#1f2528" stroke-width="2.6"/></svg>
<div class="t" style="left:73px;top:381px;font-size:21.5px;color:#1f2528">Mobile UI Kit</div>
<div class="t" style="left:73px;top:441px;font-size:21.5px;color:#1f2528">Components</div>
<div class="a" style="left:0;top:507px;width:443px;height:2px;background:#899193"></div>
<svg class="ic" style="left:34px;top:523px" width="20" height="20" viewBox="0 0 20 20"><rect x="1" y="1" width="18" height="18" fill="none" stroke="#6f7779" stroke-width="1.6" stroke-dasharray="3 4"/></svg>
<div class="t " style="left:73px;top:524px;font-size:21.5px;color:#1f2528">Hide</div>
<svg class="ic" style="left:33px;top:582px" width="21" height="21" viewBox="0 0 21 21"><path d="M6 1V20M15 1V20M1 6H20M1 15H20" stroke="#5f6769" stroke-width="2"/></svg>
<div class="t b" style="left:73px;top:583px;font-size:20.5px;color:#1f2528">Compose</div>
<svg class="ic" style="left:34px;top:641px" width="20" height="20" viewBox="0 0 20 20"><rect x="1" y="1" width="18" height="18" fill="none" stroke="#6f7779" stroke-width="1.6" stroke-dasharray="3 4"/></svg>
<div class="t " style="left:73px;top:642px;font-size:21.5px;color:#1f2528">Header/Prototyping</div>
<svg class="ic" style="left:33px;top:700px" width="21" height="21" viewBox="0 0 21 21"><path d="M6 1V20M15 1V20M1 6H20M1 15H20" stroke="#5f6769" stroke-width="2"/></svg>
<div class="t b" style="left:73px;top:701px;font-size:20.5px;color:#1f2528">Calendar</div>
<svg class="ic" style="left:33px;top:760px" width="21" height="21" viewBox="0 0 21 21"><path d="M6 1V20M15 1V20M1 6H20M1 15H20" stroke="#5f6769" stroke-width="2"/></svg>
<div class="t b" style="left:73px;top:761px;font-size:20.5px;color:#1f2528">Insights</div>
<svg class="ic" style="left:33px;top:819px" width="21" height="21" viewBox="0 0 21 21"><path d="M6 1V20M15 1V20M1 6H20M1 15H20" stroke="#5f6769" stroke-width="2"/></svg>
<div class="t b" style="left:73px;top:820px;font-size:20.5px;color:#1f2528">Images</div>
<svg class="ic" style="left:33px;top:878px" width="21" height="21" viewBox="0 0 21 21"><path d="M6 1V20M15 1V20M1 6H20M1 15H20" stroke="#5f6769" stroke-width="2"/></svg>
<div class="t b" style="left:73px;top:879px;font-size:20.5px;color:#1f2528">Images</div>
<svg class="ic" style="left:33px;top:937px" width="21" height="21" viewBox="0 0 21 21"><path d="M6 1V20M15 1V20M1 6H20M1 15H20" stroke="#5f6769" stroke-width="2"/></svg>
<div class="t b" style="left:73px;top:938px;font-size:20.5px;color:#1f2528">Compose</div>
<svg class="ic" style="left:33px;top:997px" width="21" height="21" viewBox="0 0 21 21"><path d="M6 1V20M15 1V20M1 6H20M1 15H20" stroke="#5f6769" stroke-width="2"/></svg>
<div class="t b" style="left:73px;top:998px;font-size:20.5px;color:#1f2528">Drawer</div>
<svg class="ic" style="left:33px;top:1056px" width="21" height="21" viewBox="0 0 21 21"><path d="M6 1V20M15 1V20M1 6H20M1 15H20" stroke="#1c2225" stroke-width="2"/></svg>
<div class="t b" style="left:73px;top:1057px;font-size:20.5px;color:#1f2528">Profile/Photos</div>
<svg class="ic" style="left:33px;top:1115px" width="21" height="21" viewBox="0 0 21 21"><path d="M6 1V20M15 1V20M1 6H20M1 15H20" stroke="#5f6769" stroke-width="2"/></svg>
<div class="t b" style="left:73px;top:1116px;font-size:20.5px;color:#1f2528">Profile/Posts</div>
<svg class="ic" style="left:33px;top:1175px" width="21" height="21" viewBox="0 0 21 21"><path d="M6 1V20M15 1V20M1 6H20M1 15H20" stroke="#5f6769" stroke-width="2"/></svg>
<div class="t b" style="left:73px;top:1176px;font-size:20.5px;color:#1f2528">Profile/Posts</div>
<svg class="ic" style="left:33px;top:1234px" width="21" height="21" viewBox="0 0 21 21"><path d="M6 1V20M15 1V20M1 6H20M1 15H20" stroke="#5f6769" stroke-width="2"/></svg>
<div class="t b" style="left:73px;top:1235px;font-size:20.5px;color:#1f2528">Calendar</div>
<svg class="ic" style="left:33px;top:1293px" width="21" height="21" viewBox="0 0 21 21"><path d="M6 1V20M15 1V20M1 6H20M1 15H20" stroke="#5f6769" stroke-width="2"/></svg>
<div class="t b" style="left:73px;top:1294px;font-size:20.5px;color:#1f2528">Expenses</div>
<svg class="ic" style="left:33px;top:1352px" width="21" height="21" viewBox="0 0 21 21"><path d="M6 1V20M15 1V20M1 6H20M1 15H20" stroke="#5f6769" stroke-width="2"/></svg>
<div class="t b" style="left:73px;top:1353px;font-size:20.5px;color:#1f2528">Blog Post</div>
<svg class="ic" style="left:33px;top:1412px" width="21" height="21" viewBox="0 0 21 21"><path d="M6 1V20M15 1V20M1 6H20M1 15H20" stroke="#5f6769" stroke-width="2"/></svg>
<div class="t b" style="left:73px;top:1413px;font-size:20.5px;color:#1f2528">Search</div>
<svg class="ic" style="left:33px;top:1471px" width="21" height="21" viewBox="0 0 21 21"><path d="M6 1V20M15 1V20M1 6H20M1 15H20" stroke="#5f6769" stroke-width="2"/></svg>
<div class="t b" style="left:73px;top:1472px;font-size:20.5px;color:#1f2528">Congratulations</div>
<svg class="ic" style="left:79px;top:1530px" width="20" height="20" viewBox="0 0 20 20"><rect x="1" y="1" width="18" height="18" fill="none" stroke="#6f7779" stroke-width="1.6" stroke-dasharray="3 4"/></svg>
<div class="t " style="left:118px;top:1531px;font-size:21.5px;color:#1f2528">Popup</div>
<svg class="ic" style="left:78px;top:1588px" width="22" height="22" viewBox="0 0 22 22"><path d="M11 1L21 11 11 21 1 11Z" fill="none" stroke="#737b7d" stroke-width="1.6"/></svg>
<div class="t " style="left:118px;top:1590px;font-size:21.5px;color:#5b4fa8">iOS/Status Bar/White</div>
<svg class="ic" style="left:33px;top:1649px" width="21" height="21" viewBox="0 0 21 21"><path d="M6 1V20M15 1V20M1 6H20M1 15H20" stroke="#1c2225" stroke-width="2"/></svg>
<div class="t b" style="left:73px;top:1650px;font-size:20.5px;color:#1f2528">Log In</div>
<svg class="ic" style="left:33px;top:1708px" width="21" height="21" viewBox="0 0 21 21"><path d="M6 1V20M15 1V20M1 6H20M1 15H20" stroke="#1c2225" stroke-width="2"/></svg>
<div class="t b" style="left:73px;top:1709px;font-size:20.5px;color:#1f2528">Sign Up</div>
<!-- RIGHT PANEL -->
<div class="a" style="left:2355px;top:158px;width:445px;height:1590px;background:#8f9799"></div>
<div class="a" style="left:2336px;top:170px;width:12px;height:400px;border-radius:6px;background:#6d7376"></div>
<div class="t b" style="left:2386px;top:188px;font-size:20.5px;color:#1f2528">Design</div>
<div class="t" style="left:2483px;top:188px;font-size:21.5px;color:#5c6466">Prototype</div>
<svg class="ic" style="left:2355px;top:240px" width="445" height="50" viewBox="2355 240 445 50">
 <g fill="none" stroke="#1f2528" stroke-width="3">
  <path d="M2388 251V275M2393 257H2409M2393 268H2402"/>
  <path d="M2450 257H2470M2453 268H2467M2460 251V275"/>
  <path d="M2531 251V275M2510 257H2526M2517 268H2526"/>
  <path d="M2566 251H2590M2572 256V273M2583 256V264"/>
  <path d="M2625 263H2650M2631 254V272M2642 256V270"/>
  <path d="M2685 274H2709M2691 257V269M2702 262V269"/>
 </g>
 <g fill="#1f2528"><rect x="2737" y="251" width="4" height="4"/><rect x="2746" y="251" width="4" height="4"/><rect x="2755" y="251" width="4" height="4"/><rect x="2737" y="260" width="4" height="4"/><rect x="2746" y="260" width="4" height="4"/><rect x="2755" y="260" width="4" height="4"/><rect x="2737" y="269" width="4" height="4"/><rect x="2746" y="269" width="4" height="4"/><rect x="2755" y="269" width="4" height="4"/></g>
 <path d="M2766 260l5 5 5-5" fill="none" stroke="#1f2528" stroke-width="1.8"/>
</svg>
<div class="a" style="left:2355px;top:307px;width:445px;height:2px;background:#899193"></div>
<div class="t b" style="left:2386px;top:345px;font-size:20.5px;color:#1f2528">Frame</div>
<svg class="ic" style="left:2458px;top:350px" width="14" height="10" viewBox="0 0 14 10"><path d="M2 2l5 5 5-5" fill="none" stroke="#6a7274" stroke-width="1.6"/></svg>
<div class="a" style="left:2616px;top:332px;width:45px;height:44px;border-radius:5px;background:#858c8e"></div>
<svg class="ic" style="left:2600px;top:335px" width="180" height="40" viewBox="2600 335 180 40">
 <g fill="none" stroke="#1f2528" stroke-width="2">
  <rect x="2630" y="343" width="14" height="22"/>
  <rect x="2670" y="347" width="25" height="13"/>
  <path d="M2746 344l5 5M2751 344v5h-5M2766 344l-5 5M2761 344v5h5M2746 364l5-5M2751 364v-5h-5M2766 364l-5-5M2761 364v-5h5"/>
 </g>
</svg>
<div class="t" style="left:2394px;top:404px;font-size:21.5px;color:#5c6466">X</div>
<div class="t" style="left:2431px;top:404px;font-size:21.5px;color:#1f2528">Mixed</div>
<div class="t" style="left:2572px;top:404px;font-size:21.5px;color:#5c6466">Y</div>
<div class="t" style="left:2609px;top:404px;font-size:21.5px;color:#1f2528">Mixed</div>
<div class="t" style="left:2392px;top:463px;font-size:21.5px;color:#5c6466">W</div>
<div class="t" style="left:2431px;top:463px;font-size:21.5px;color:#1f2528">375</div>
<div class="t" style="left:2571px;top:463px;font-size:21.5px;color:#5c6466">H</div>
<div class="t" style="left:2609px;top:463px;font-size:21.5px;color:#1f2528">812</div>
<svg class="ic" style="left:2600px;top:455px" width="180" height="220" viewBox="2600 455 180 220">
 <g fill="none" stroke="#1f2528" stroke-width="2">
  <path d="M2751 466a5 5 0 0 1 10 0v4M2751 475v4a5 5 0 0 0 10 0v-4M2751 470v-4M2761 470"/>
  <path d="M2746 529v-6h6M2760 523h6v6M2766 535v6h-6M2752 541h-6v-6"/>
 </g>
 <g fill="none" stroke="#555d5f" stroke-width="2">
  <path d="M2587 524h-6a10 10 0 0 0-10 10v6"/>
  <path d="M2567 639v4h23v-4M2567 661v-4h23v4M2572 650h13"/>
 </g>
</svg>
<svg class="ic" style="left:2385px;top:520px" width="30" height="150" viewBox="0 0 30 150">
 <g fill="none" stroke="#555d5f" stroke-width="2"><path d="M9 3V20H25M9 11a9 9 0 0 1 8 9"/><path d="M3 121h4v21H3M27 121h-4v21h4M15 126v11"/></g>
</svg>
<div class="t" style="left:2431px;top:522px;font-size:21.5px;color:#1f2528">0°</div>
<div class="t" style="left:2609px;top:522px;font-size:21.5px;color:#1f2528">0</div>
<div class="a" style="left:2390px;top:580px;width:22px;height:22px;border-radius:4px;background:#2f6cb3"></div>
<svg class="ic" style="left:2393px;top:583px" width="16" height="16" viewBox="0 0 16 16"><path d="M3 8l3.5 3.5L13 5" fill="none" stroke="#c9d6e3" stroke-width="2.2"/></svg>
<div class="t" style="left:2431px;top:582px;font-size:21.5px;color:#1f2528">Clip content</div>
<div class="t" style="left:2431px;top:641px;font-size:21.5px;color:#1f2528">-187</div>
<div class="t" style="left:2609px;top:641px;font-size:21.5px;color:#1f2528">88</div>
<div class="a" style="left:2355px;top:694px;width:445px;height:2px;background:#899193"></div>
<div class="t b" style="left:2386px;top:732px;font-size:20.5px;color:#5c6466">Auto layout</div>
<div class="a" style="left:2355px;top:785px;width:445px;height:2px;background:#899193"></div>
<div class="t b" style="left:2386px;top:823px;font-size:20.5px;color:#5c6466">Layout grid</div>
<div class="a" style="left:2355px;top:875px;width:445px;height:2px;background:#899193"></div>
<div class="t b" style="left:2386px;top:914px;font-size:20.5px;color:#1f2528">Layer</div>
<svg class="ic" style="left:2391px;top:969px" width="20" height="24" viewBox="0 0 20 24"><path d="M10 3C6 9 4 12 4 15a6 6 0 0 0 12 0c0-3-2-6-6-12z" fill="none" stroke="#555d5f" stroke-width="2"/></svg>
<div class="t" style="left:2431px;top:973px;font-size:21.5px;color:#1f2528">Pass through</div>
<svg class="ic" style="left:2568px;top:978px" width="14" height="10" viewBox="0 0 14 10"><path d="M2 2l5 5 5-5" fill="none" stroke="#6a7274" stroke-width="1.6"/></svg>
<div class="t" style="left:2654px;top:973px;font-size:21.5px;color:#1f2528">100%</div>
<svg class="ic" style="left:2742px;top:970px" width="28" height="24" viewBox="0 0 28 24"><path d="M2 12c4-6 8-8 12-8s8 2 12 8c-4 6-8 8-12 8s-8-2-12-8z" fill="none" stroke="#1f2528" stroke-width="2.2"/><circle cx="14" cy="12" r="4" fill="#1f2528"/></svg>
<div class="a" style="left:2355px;top:1025px;width:445px;height:2px;background:#899193"></div>
<div class="a" style="left:2386px;top:1058px;width:30px;height:30px;border-radius:50%;background:#919999;border:1px solid #889092"></div>
<div class="t" style="left:2431px;top:1064px;font-size:21.5px;color:#1f2528">White</div>
<div class="a" style="left:2746px;top:1072px;width:20px;height:2px;background:#1f2528"></div>
<div class="a" style="left:2355px;top:1116px;width:445px;height:2px;background:#899193"></div>
<div class="t b" style="left:2386px;top:1155px;font-size:20.5px;color:#5c6466">Stroke</div>
<div class="a" style="left:2355px;top:1207px;width:445px;height:2px;background:#899193"></div>
<svg class="ic" style="left:2745px;top:720px" width="24" height="460" viewBox="0 0 24 460"><g stroke="#1f2528" stroke-width="2"><path d="M11 11V31M1 21H21"/><path d="M11 102V122M1 112H21"/><path d="M11 434V454M1 444H21"/></g></svg>
<div class="t b" style="left:2386px;top:1246px;font-size:20.5px;color:#1f2528">Selection colors</div>
<div class="a" style="left:2386px;top:1299px;width:30px;height:30px;border-radius:50%;background:#989ea0"></div>
<div class="t" style="left:2431px;top:1304px;font-size:21.5px;color:#1f2528">Gray/02</div>
<div class="a" style="left:2386px;top:1358px;width:30px;height:30px;border-radius:50%;background:#7c8385"></div>
<div class="t" style="left:2431px;top:1364px;font-size:21.5px;color:#1f2528">Gray/03</div>
<div class="a" style="left:2386px;top:1417px;width:30px;height:30px;border-radius:50%;background:#4b8a5f"></div>
<div class="t" style="left:2431px;top:1423px;font-size:21.5px;color:#1f2528">Green/Primary</div>
<div class="t" style="left:2427px;top:1483px;font-size:21.5px;color:#5c6466">See all 7 library colors</div>
<div class="a" style="left:2386px;top:1537px;width:29px;height:29px;border-radius:2px;background:#1b2022"></div>
<div class="t" style="left:2431px;top:1542px;font-size:21.5px;color:#1f2528">000000</div>
<div class="t" style="left:2565px;top:1542px;font-size:21.5px;color:#1f2528">100%</div>
<div class="a" style="left:2386px;top:1596px;width:29px;height:29px;border-radius:2px;background:#8f9799;border:1px solid #878f91"></div>
<div class="t" style="left:2431px;top:1601px;font-size:21.5px;color:#1f2528">FCFCFE</div>
<div class="t" style="left:2565px;top:1601px;font-size:21.5px;color:#1f2528">100%</div>
<div class="a" style="left:2386px;top:1655px;width:29px;height:29px;border-radius:2px;background:#8f9799;border:1px solid #878f91"></div>
<div class="t" style="left:2431px;top:1661px;font-size:21.5px;color:#1f2528">FFFFFF</div>
<div class="t" style="left:2565px;top:1661px;font-size:21.5px;color:#1f2528">100%</div>
<div class="t" style="left:2427px;top:1720px;font-size:21.5px;color:#5c6466">See all 9 colors</div>
<svg class="ic" style="left:2398px;top:1480px" width="6" height="260" viewBox="0 0 6 260"><g fill="#7d8587"><circle cx="3" cy="4" r="1.3"/><circle cx="3" cy="11" r="1.3"/><circle cx="3" cy="18" r="1.3"/><circle cx="3" cy="241" r="1.3"/><circle cx="3" cy="248" r="1.3"/><circle cx="3" cy="255" r="1.3"/></g></svg>
<div class="a" style="left:2711px;top:1660px;width:60px;height:60px;border-radius:50%;background:#22282b"></div>
<div class="t" style="left:2711px;top:1678px;width:60px;text-align:center;font-size:28px;color:#9aa0a3">?</div>
</body></html>
